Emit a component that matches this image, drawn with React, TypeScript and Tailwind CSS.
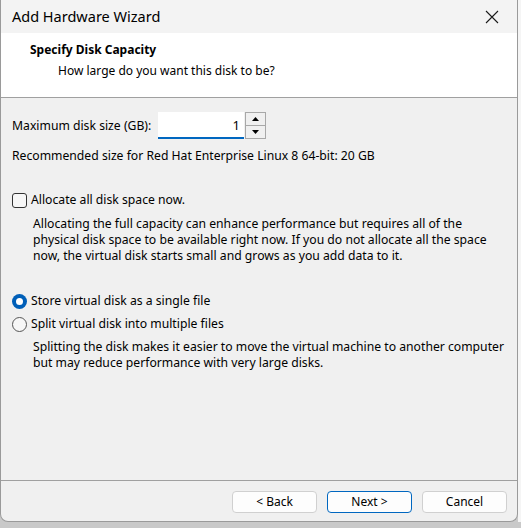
import React from 'react';

const font = { fontFamily: '"Noto Sans", "Open Sans", sans-serif' };

const App: React.FC = () => {
  return (
    <div className="w-[521px] h-[528px] bg-[#c9c9c9] flex overflow-hidden" style={font}>
      {/* Dialog window */}
      <div className="w-[518px] h-[522px] flex flex-col bg-[#f0f0f0] border-l border-r border-b border-[#9a9a9a] rounded-b-[8px] overflow-hidden shrink-0">
        {/* Title bar */}
        <div className="h-[33px] shrink-0 bg-[#f3f3f3] flex items-center justify-between pl-[11px] pr-[18px]">
          <span className="text-[14.5px] text-black">Add Hardware Wizard</span>
          <svg width="14" height="14" viewBox="0 0 14 14" className="text-[#1a1a1a]">
            <path d="M1 1 L13 13 M13 1 L1 13" stroke="currentColor" strokeWidth="1.1" />
          </svg>
        </div>

        {/* Header */}
        <div className="h-[65px] shrink-0 bg-white border-b border-[#a0a0a0] pt-[8px] pl-[29px]">
          <div className="text-[12px] font-bold text-black leading-[18px]">Specify Disk Capacity</div>
          <div className="text-[12px] text-black leading-[18px] pl-[28px] mt-[3px]">How large do you want this disk to be?</div>
        </div>

        {/* Body */}
        <div className="flex-1 pl-[11px] pt-[14px] text-[12.2px] text-black leading-[16px]">
          <div className="flex items-center">
            <span className="w-[146px]">Maximum disk size (GB):</span>
            <div className="w-[86px] h-[27px] bg-white border-b-2 border-[#0067c0] flex items-center justify-end pr-[4px] text-[13px]">1</div>
            <div className="w-[21px] h-[27px] border border-[#a8a8a8] bg-[#f0f0f0] flex flex-col ml-[1px]">
              <div className="flex-1 border-b border-[#a8a8a8] flex items-center justify-center">
                <svg width="7" height="4" viewBox="0 0 7 4"><path d="M3.5 0 L7 4 L0 4 Z" fill="#000" /></svg>
              </div>
              <div className="flex-1 flex items-center justify-center">
                <svg width="7" height="4" viewBox="0 0 7 4"><path d="M0 0 L7 0 L3.5 4 Z" fill="#000" /></svg>
              </div>
            </div>
          </div>

          <div className="mt-[9px]">Recommended size for Red Hat Enterprise Linux 8 64-bit: 20 GB</div>

          <div className="mt-[28px] flex items-center">
            <div className="w-[15px] h-[15px] rounded-[3px] border border-[#333] bg-[#f7f7f7] mr-[4px]" />
            <span>Allocate all disk space now.</span>
          </div>
          <p className="mt-[8px] ml-[21px] leading-[16px] w-[478px]">
            Allocating the full capacity can enhance performance but requires all of the physical disk space to be available right now. If you do not allocate all the space now, the virtual disk starts small and grows as you add data to it.
          </p>

          <div className="mt-[29px] flex items-center">
            <div className="w-[15px] h-[15px] rounded-full bg-[#005fb8] flex items-center justify-center mr-[4px]">
              <div className="w-[7px] h-[7px] rounded-full bg-white" />
            </div>
            <span>Store virtual disk as a single file</span>
          </div>
          <div className="mt-[7px] flex items-center">
            <div className="w-[15px] h-[15px] rounded-full border border-[#555] bg-[#f7f7f7] mr-[4px]" />
            <span>Split virtual disk into multiple files</span>
          </div>
          <p className="mt-[7px] ml-[21px] leading-[16px] w-[478px]">
            Splitting the disk makes it easier to move the virtual machine to another computer but may reduce performance with very large disks.
          </p>
        </div>

        {/* Footer */}
        <div className="h-[41px] shrink-0 border-t border-[#a0a0a0] flex items-start justify-end gap-[10px] pt-[10px] pr-[10px]">
          <button className="w-[85px] h-[22px] bg-[#fdfdfd] border border-[#d0d0d0] rounded-[4px] text-[12px] text-black">&lt; Back</button>
          <button className="w-[85px] h-[22px] bg-[#fdfdfd] border border-[#0067c0] rounded-[4px] text-[12px] text-black">Next &gt;</button>
          <button className="w-[85px] h-[22px] bg-[#fdfdfd] border border-[#d0d0d0] rounded-[4px] text-[12px] text-black">Cancel</button>
        </div>
      </div>

      {/* Background window peeking through */}
      <div className="flex-1 h-[522px] bg-[#f5f5f5]" />
    </div>
  );
};

export default App;
